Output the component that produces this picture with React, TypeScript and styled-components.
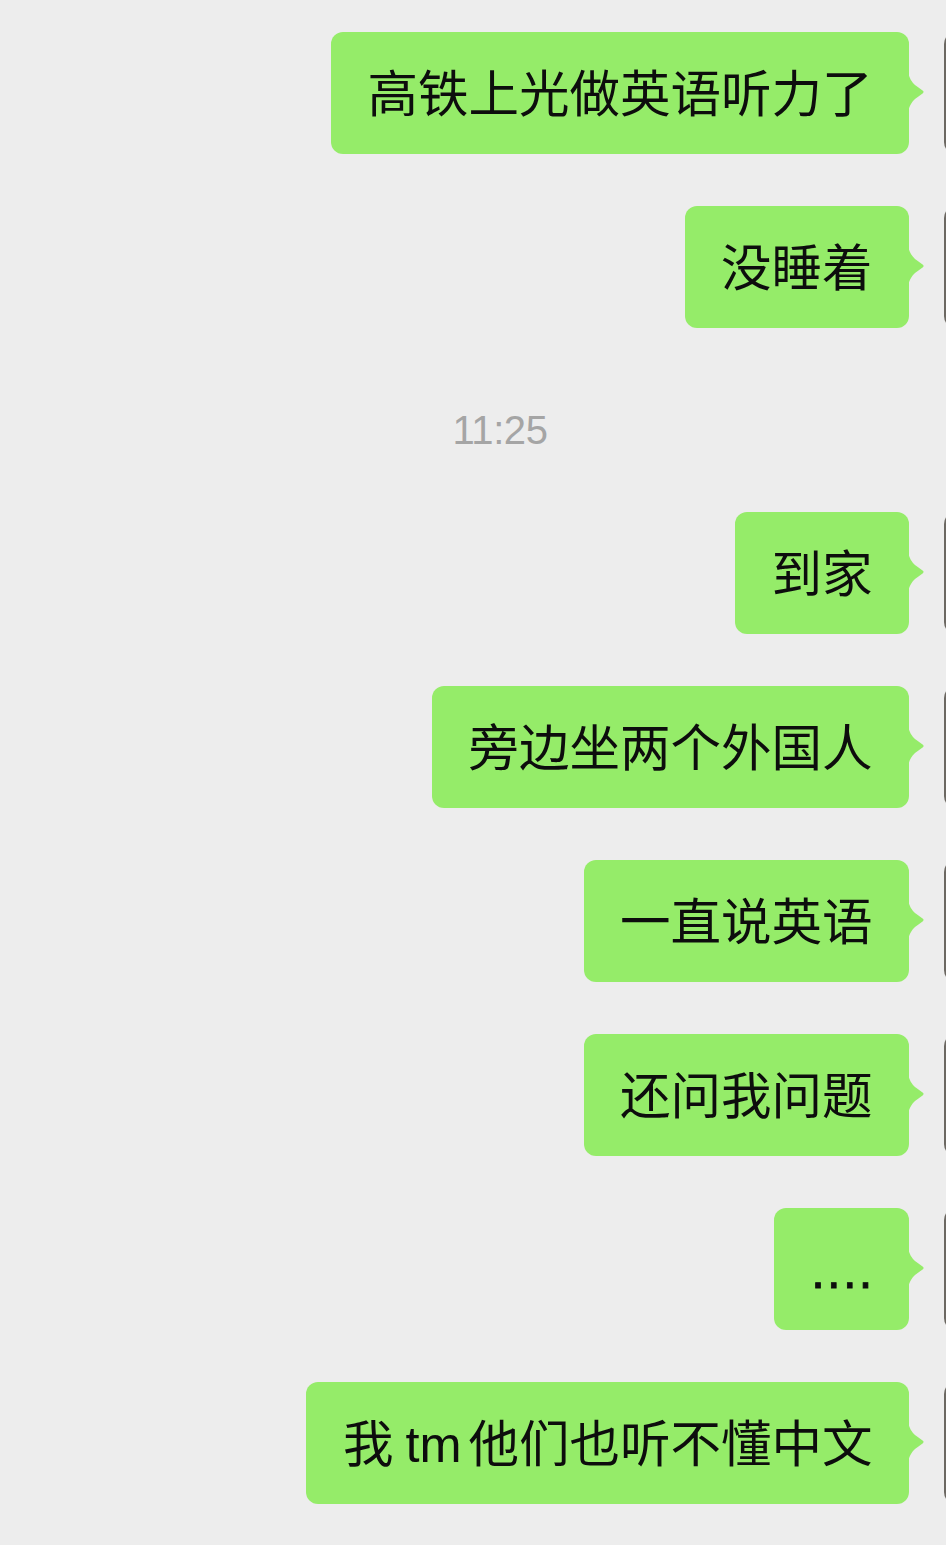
import React, { FC } from "react";
import styled, { createGlobalStyle } from "styled-components";

const GlobalStyle = createGlobalStyle`
    html, body {
        margin: 0;
        padding: 0;
        background: #ededed;
        overflow: hidden;
    }
`

const Page = styled.div`
    width: 946px;
    min-height: 1545px;
    overflow: hidden;
    background: #ededed;
    padding-top: 32px;
    box-sizing: border-box;
    display: flex;
    flex-direction: column;
    font-family: "Liberation Sans", "Noto Sans CJK SC", sans-serif;
`

const Row = styled.div`
    display: flex;
    justify-content: flex-end;
    align-items: flex-start;
    gap: 35px;
    margin-right: -120px;
    margin-bottom: 52px;
`

const Bubble = styled.div`
    position: relative;
    box-sizing: border-box;
    height: 122px;
    padding: 3px 36.5px 0;
    display: flex;
    align-items: center;
    background: #95ec69;
    border-radius: 12px;
    color: #0d0d0d;
    font-size: 50.5px;
    line-height: 60px;
    white-space: nowrap;
`

const Tail = styled.svg`
    position: absolute;
    left: calc(100% - 1px);
    top: 40px;
    width: 17px;
    height: 40px;
`

const Avatar = styled.div`
    flex: none;
    width: 122px;
    height: 122px;
    border-radius: 12px;
    background: #6c6862;
`

const Latin = styled.span`
    margin: 0 7px 0 12px;
`

const Dots = styled.span`
    letter-spacing: 1.8px;
    margin-right: -1.8px;
    -webkit-text-stroke: 0.8px #0d0d0d;
`

const Time = styled.div`
    text-align: center;
    padding-left: 54px;
    margin: 26px 0 58px;
    color: #a5a5a5;
    font-size: 40px;
    line-height: 48px;
    letter-spacing: -0.4px;
`

const Message: FC<{ children: React.ReactNode }> = ({ children }) => (
    <Row>
        <Bubble>
            {children}
            <Tail viewBox="0 0 17 40">
                <path d="M0 0 C1.5 6.5 3.5 9.5 7 13 L14.6 18.6 Q16.6 20 14.6 21.4 L7 27 C3.5 30.5 1.5 33.5 0 40 Z" fill="#95ec69" />
            </Tail>
        </Bubble>
        <Avatar />
    </Row>
)

export default function App() {
    return (
        <>
            <GlobalStyle />
            <Page>
                <Message>高铁上光做英语听力了</Message>
                <Message>没睡着</Message>
                <Time>11:25</Time>
                <Message>到家</Message>
                <Message>旁边坐两个外国人</Message>
                <Message>一直说英语</Message>
                <Message>还问我问题</Message>
                <Message><Dots>....</Dots></Message>
                <Message>我<Latin>tm</Latin>他们也听不懂中文</Message>
            </Page>
        </>
    )
}
